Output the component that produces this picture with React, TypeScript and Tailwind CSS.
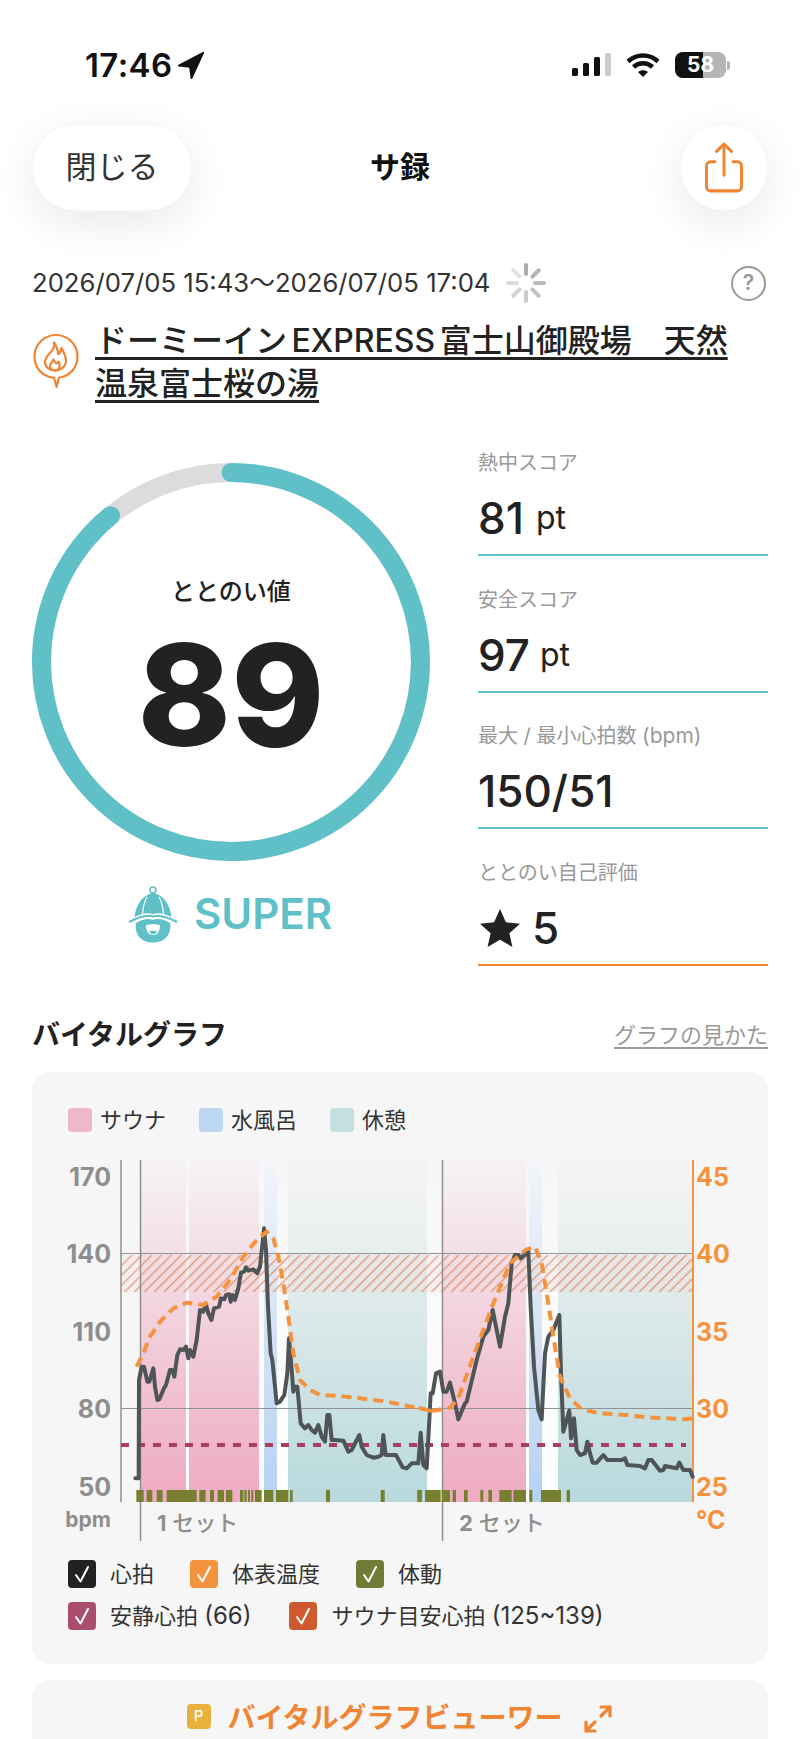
import React from "react";

const FONT = "font-['Inter','Noto_Sans_CJK_JP',sans-serif]";

// points are read off the chart at 3x, first list offset 40px, second 400px
const hrA: [number, number][] = [[286,1015],[296,1015],[297,720],[305,680],[312,680],[322,725],[328,725],[340,685],[345,740],[352,780],[358,778],[372,745],[378,735],[390,690],[398,690],[403,710],[412,645],[420,628],[430,630],[438,620],[445,655],[450,630],[460,650],[470,600],[480,510],[490,515],[497,490],[505,520],[514,540],[522,505],[537,500],[543,475],[553,478],[558,465],[568,463],[572,485],[577,465],[585,480],[595,445],[603,397],[612,395],[618,382],[625,392],[640,388],[652,400],[660,380],[672,265],[678,330],[684,500],[692,640],[697,660],[710,790],[720,785],[733,765],[742,700],[747,595],[752,650],[760,755],[765,740],[772,740],[782,850],[795,865],[805,855],[815,870],[825,878],[835,855],[845,890],[855,905],[862,825],[868,825],[875,900],[885,900],[910,902],[925,935],[935,930],[958,885],[965,920],[980,945],[1000,953],[1015,950],[1025,945],[1030,885],[1037,945],[1048,945],[1068,945],[1088,982],[1100,985],[1115,970],[1135,970],[1142,878],[1150,975],[1160,985],[1168,840],[1172,760],[1178,760],[1188,700]];
const hrB: [number, number][] = [[120,695],[130,755],[140,755],[150,728],[165,790],[175,838],[195,790],[200,785],[230,660],[250,590],[265,570],[278,510],[300,620],[315,530],[325,490],[335,370],[345,345],[355,345],[362,355],[385,335],[392,500],[402,680],[415,810],[425,838],[435,640],[445,590],[460,570],[478,525],[483,700],[490,875],[500,840],[508,812],[513,895],[522,835],[530,930],[540,945],[555,940],[562,905],[570,940],[578,968],[590,968],[610,945],[622,960],[665,960],[675,955],[682,975],[720,978],[735,985],[745,960],[755,960],[780,992],[790,990],[795,978],[830,985],[838,968],[850,990],[870,990],[878,1010]];
const tempA: [number, number][] = [[290,680],[310,640],[330,590],[360,545],[400,505],[440,488],[490,495],[530,470],[570,420],[610,350],[650,300],[680,275],[700,295],[715,350],[730,430],[745,530],[760,640],[780,720],[810,750],[840,765],[900,768],[960,775],[1040,785],[1100,797],[1170,812]];
const tempB: [number, number][] = [[60,805],[100,812],[150,803],[175,775],[220,650],[280,490],[330,370],[380,328],[405,320],[425,370],[445,490],[460,590],[480,710],[510,775],[545,808],[600,820],[680,825],[740,832],[800,835],[850,838],[880,835]];

const toPoints = (a: [number, number][], b: [number, number][]) =>
    [
        ...a.map(([x, y]) => `${x / 3 + 40},${y / 3 + 1140}`),
        ...b.map(([x, y]) => `${x / 3 + 400},${y / 3 + 1140}`),
    ].join(" ");

const moveA: [number, number][] = [[289,311],[320,337],[350,368],[380,470],[478,497],[510,522],[533,552],[558,577],[600,610],[613,620],[624,630],[634,640],[645,665],[672,700],[708,745],[750,758],[858,870],[1022,1034],[1133,1145],[1155,1200]];
const moveB: [number, number][] = [[52,65],[75,122],[125,150],[158,168],[192,203],[241,250],[265,276],[298,335],[340,378],[388,397],[423,483],[500,510]];

const leftTicks = [["170", 1177], ["140", 1254], ["110", 1332], ["80", 1409], ["50", 1487]] as const;
const rightTicks = [["45", 1177], ["40", 1254], ["35", 1332], ["30", 1409], ["25", 1487]] as const;

const Spinner = () => (
    <svg width="40" height="40" viewBox="-20 -20 40 40">
        {[0, 45, 90, 135, 180, 225, 270, 315].map((deg, i) => (
            <line
                key={deg}
                x1="0"
                y1="-9"
                x2="0"
                y2="-18"
                stroke="#a8a8a8"
                strokeWidth="4"
                strokeLinecap="round"
                opacity={0.95 - i * 0.09}
                transform={`rotate(${deg})`}
            />
        ))}
    </svg>
);

const PinFlame = () => (
    <svg width="48" height="58" viewBox="0 0 48 58" fill="none" stroke="#ef8432" strokeWidth="2.2" strokeLinejoin="round" strokeLinecap="round">
        <path d="M20 44.5C9.5 42.8 2.5 34 2.5 23.5 2.5 11.6 12.1 2 24 2s21.5 9.6 21.5 21.5c0 10.5-7 19.300-17.500 21l-1 0-2.500 9.500-2.500-9.500z" />
        <path d="M22 10c1 4-1 7-4 10-3 3-5 6-5 9 0 5 4.500 8.500 10 8.500s11-3.500 11-10c0-4-2-8-4.500-12.500-.5 3-1.500 5-3 6-.5-4-2-8-4.500-11.500z" />
        <path d="M23 37.500c-3 0-5-2-5-4.500 0-2 2-4 3.500-6.500 1 2 1.500 3 3 4 1-.5 2-1.500 2-2 .8 1.500 1.500 3 1 5-.5 2.500-2 4-4.500 4z" />
    </svg>
);

const Mascot = () => (
    <svg width="50" height="58" viewBox="0 0 50 58">
        <circle cx="25" cy="5" r="3" fill="none" stroke="#5fc0c8" strokeWidth="1.600" />
        <path d="M25 8C14 10 8 20 6.500 32 13 29 19 27 25 29 31 27 37 29 43.500 32 42 20 36 10 25 8z" fill="#5fc0c8" />
        <path d="M19 12C16 17 15 23 14.500 29M31 12C34 17 35 23 35.500 29" fill="none" stroke="#fff" strokeWidth="1.200" />
        <path d="M1 37C9 33 18 29 25 31.500 32 29 41 33 49 37" fill="none" stroke="#5fc0c8" strokeWidth="2" />
        <path d="M8 38C14 34.500 20 33 25 35 30 33 36 34.500 42 38 44 50 36 57.500 25 57.500 14 57.500 6 50 8 38z" fill="#5fc0c8" />
        <path d="M18 40C22 39 28 39 32 40 32 47 29 50 25 50 21 50 18 47 18 40z" fill="#fff" />
        <path d="M21 46.500C23 45.500 27 45.500 29 46.500 28 48.500 26.500 49 25 49 23.500 49 22 48.500 21 46.500z" fill="#5fc0c8" />
    </svg>
);

const Stat: React.FC<{ label: React.ReactNode; line: string; children: React.ReactNode }> = ({ label, line, children }) => (
    <div className={`h-[111px] border-b-[2.5px] ${line}`}>
        <p className="h-[36px] text-[20px] leading-[36px] text-[#999999]">{label}</p>
        <div className="mt-[13px] flex h-[48px] items-center text-[#222222]">{children}</div>
    </div>
);

const LegendSwatch: React.FC<{ color: string; label: string }> = ({ color, label }) => (
    <div className="flex items-center gap-[8px]">
        <span className={`h-[24px] w-[24px] rounded-[4px] ${color}`} />
        <span className="text-[22px] leading-[24px] text-[#333333]">{label}</span>
    </div>
);

const CheckItem: React.FC<{ color: string; label: React.ReactNode }> = ({ color, label }) => (
    <div className="flex items-center gap-[14px]">
        <span className={`flex h-[28px] w-[28px] items-center justify-center rounded-[4px] ${color}`}>
            <svg width="16" height="18" viewBox="0 0 16 18" fill="none" stroke="#fff" strokeWidth="2" strokeLinecap="round" strokeLinejoin="round">
                <path d="M2 10l4.500 6.500L14 2" />
            </svg>
        </span>
        <span className="text-[22px] leading-[28px] text-[#333333]">{label}</span>
    </div>
);

const VitalChart = () => (
    <svg width="736" height="410" viewBox="32 1140 736 410" className="mt-[8px] block">
        <defs>
            <linearGradient id="plot" x1="0" y1="0" x2="0" y2="1">
                <stop offset="0" stopColor="#f6f6f6" />
                <stop offset="1" stopColor="#ffffff" />
            </linearGradient>
            <linearGradient id="sauna" x1="0" y1="0" x2="0" y2="1">
                <stop offset="0" stopColor="#f6f3f5" />
                <stop offset="1" stopColor="#eeaac2" />
            </linearGradient>
            <linearGradient id="water" x1="0" y1="0" x2="0" y2="1">
                <stop offset="0" stopColor="#f3f5f9" />
                <stop offset="1" stopColor="#b5d2f2" />
            </linearGradient>
            <linearGradient id="rest" x1="0" y1="0" x2="0" y2="1">
                <stop offset="0" stopColor="#f4f4f4" />
                <stop offset="0.2" stopColor="#ecf0f0" />
                <stop offset="1" stopColor="#b8d9dc" />
            </linearGradient>
            <pattern id="hatch" width="7" height="7" patternUnits="userSpaceOnUse" patternTransform="rotate(45)">
                <rect x="0" y="0" width="1.300" height="7" fill="#d4643c" opacity="0.6" />
            </pattern>
        </defs>

        <rect x="140" y="1160" width="553" height="342" fill="url(#plot)" />
        <rect x="140" y="1160" width="46" height="342" fill="url(#sauna)" />
        <rect x="189" y="1160" width="70" height="342" fill="url(#sauna)" />
        <rect x="264" y="1160" width="13" height="342" fill="url(#water)" />
        <rect x="288" y="1160" width="139" height="342" fill="url(#rest)" />
        <rect x="443" y="1160" width="83" height="342" fill="url(#sauna)" />
        <rect x="529" y="1160" width="13" height="342" fill="url(#water)" />
        <rect x="558" y="1160" width="135" height="342" fill="url(#rest)" />

        <rect x="121" y="1255" width="572" height="37" fill="#f3d9cf" opacity="0.3" />
        <rect x="121" y="1255" width="572" height="37" fill="url(#hatch)" />

        <line x1="121" y1="1253.500" x2="693" y2="1253.500" stroke="#8f9296" strokeWidth="1.200" />
        <line x1="121" y1="1408.500" x2="693" y2="1408.500" stroke="#8f9296" strokeWidth="1.200" />
        <line x1="121" y1="1160" x2="121" y2="1502" stroke="#8f8f8f" strokeWidth="1.500" />
        <line x1="140.500" y1="1160" x2="140.500" y2="1541" stroke="#8f8f8f" strokeWidth="1.500" />
        <line x1="442.500" y1="1160" x2="442.500" y2="1541" stroke="#8f8f8f" strokeWidth="1.500" />
        <line x1="693" y1="1160" x2="693" y2="1502" stroke="#f5923e" strokeWidth="2" />

        {moveA.map(([a, b]) => (
            <rect key={`a${a}`} x={a / 3 + 40} y="1490" width={(b - a) / 3} height="12" fill="#76802f" />
        ))}
        {moveB.map(([a, b]) => (
            <rect key={`b${a}`} x={a / 3 + 400} y="1490" width={(b - a) / 3} height="12" fill="#76802f" />
        ))}

        <line x1="121" y1="1445" x2="686" y2="1445" stroke="#a93d62" strokeWidth="4" strokeDasharray="8 8" />
        <polyline points={toPoints(hrA, hrB)} fill="none" stroke="#4f5456" strokeWidth="4" strokeLinejoin="round" strokeLinecap="round" />
        <polyline points={toPoints(tempA, tempB)} fill="none" stroke="#f5923e" strokeWidth="4" strokeDasharray="10 6" strokeLinejoin="round" />

        <g fontSize="25" fontWeight="700">
            {leftTicks.map(([t, y]) => (
                <text key={t} x="111" y={y} textAnchor="end" dominantBaseline="central" fill="#8e8e8e">{t}</text>
            ))}
            {rightTicks.map(([t, y]) => (
                <text key={t} x="696" y={y} dominantBaseline="central" fill="#f5923e">{t}</text>
            ))}
            <text x="696" y="1520" dominantBaseline="central" fill="#f5923e">°C</text>
        </g>
        <text x="111" y="1519" textAnchor="end" dominantBaseline="central" fontSize="21" fontWeight="700" fill="#8e8e8e">bpm</text>
        <text x="157" y="1523" dominantBaseline="central" fontSize="22" fontWeight="500" fill="#8e8e8e"><tspan fontWeight="700">1</tspan> セット</text>
        <text x="459" y="1523" dominantBaseline="central" fontSize="22" fontWeight="500" fill="#8e8e8e"><tspan fontWeight="700">2</tspan> セット</text>
    </svg>
);

export default function App() {
    return (
        <div className={`h-[1739px] overflow-hidden bg-white px-[32px] ${FONT}`}>
            {/* Status bar */}
            <div className="-mx-[32px] flex h-[100px] items-center justify-between pl-[85px] pr-[70px] pt-[30px]">
                <div className="flex items-center gap-[5px]">
                    <span className="text-[33px] font-semibold leading-none tracking-[0.4px] text-[#111111]">17:46</span>
                    <svg width="28" height="28" viewBox="0 0 30 30" fill="#111111">
                        <path d="M28 2 2 15.500l12 1.500 1.500 12z" stroke="#111111" strokeWidth="2" strokeLinejoin="round" />
                    </svg>
                </div>
                <div className="flex items-center">
                    <svg width="39" height="26" viewBox="0 0 39 26">
                        <rect x="0" y="16" width="6" height="8" rx="1.500" fill="#111111" />
                        <rect x="11" y="11" width="6" height="13" rx="1.500" fill="#111111" />
                        <rect x="22" y="5" width="6" height="19" rx="1.500" fill="#111111" />
                        <rect x="33" y="1" width="6" height="23" rx="1.500" fill="#cccccc" />
                    </svg>
                    <svg className="ml-[15px]" width="34" height="26" viewBox="0 0 34 26" fill="none" stroke="#111111" strokeWidth="4.500">
                        <path d="M2 9.500C10.500 1.500 23.500 1.500 32 9.500" />
                        <path d="M7.500 15C13 10 21 10 26.500 15" />
                        <path d="M17 25l-5-5c3-2.500 7-2.500 10 0z" fill="#111111" stroke="none" />
                    </svg>
                    <div className="relative ml-[15px] h-[26px] w-[51px] overflow-hidden rounded-[8px] bg-[#b5b5b5]">
                        <div className="h-full w-[28px] bg-[#111111]" />
                        <span className="absolute inset-0 flex items-center justify-center text-[21px] font-bold text-white">58</span>
                    </div>
                    <span className="ml-[1px] h-[9px] w-[3px] rounded-r-[2px] bg-[#b5b5b5]" />
                </div>
            </div>

            {/* Nav */}
            <div className="mt-[24px] grid h-[87px] grid-cols-[1fr_auto_1fr] items-center">
                <button className="h-[87px] w-[160px] rounded-full border border-[#f6f6f6] bg-white text-[31px] text-[#333333] shadow-[0_12px_44px_rgba(0,0,0,0.09)]">
                    閉じる
                </button>
                <h1 className="text-[30px] font-bold text-[#111111]">サ録</h1>
                <button className="flex h-[87px] w-[88px] items-center justify-center justify-self-end rounded-full border border-[#f6f6f6] bg-white shadow-[0_12px_44px_rgba(0,0,0,0.09)]">
                    <svg width="40" height="54" viewBox="0 0 40 52" preserveAspectRatio="none" fill="none" stroke="#ef8432" strokeWidth="3" strokeLinecap="round" strokeLinejoin="round">
                        <path d="M11 20H6.500a4 4 0 0 0-4 4v20a4 4 0 0 0 4 4h27a4 4 0 0 0 4-4V24a4 4 0 0 0-4-4H29" />
                        <path d="M20 33V3M12.500 10 20 3l7.500 7" />
                    </svg>
                </button>
            </div>

            {/* Date row */}
            <div className="mt-[56px] flex h-[32px] items-center">
                <span className="text-[25.7px] leading-[32px] text-[#333333]">2026/07/05 15:43〜2026/07/05 17:04</span>
                <span className="ml-[16px]"><Spinner /></span>
                <span className="ml-auto mr-[2px] flex h-[35px] w-[35px] items-center justify-center rounded-full border-[2.5px] border-[#999999] text-[21px] font-semibold text-[#999999]">?</span>
            </div>

            {/* Facility name */}
            <div className="mt-[20px] flex items-center gap-[15px] pr-[36px]">
                <span className="shrink-0"><PinFlame /></span>
                <a className="text-[32px] font-medium leading-[43px] text-[#222222] underline decoration-[3px] underline-offset-[5px] [word-spacing:-4px]">
                    ドーミーイン EXPRESS 富士山御殿場　天然温泉富士桜の湯
                </a>
            </div>

            {/* Scores */}
            <div className="mt-[40px] flex gap-[48px]">
                <div className="w-[398px] pt-[18px]">
                    <div className="relative h-[398px] w-[398px]">
                        <svg width="398" height="398" viewBox="0 0 398 398" className="absolute inset-0" fill="none" strokeWidth="19">
                            <circle cx="199" cy="199" r="189.500" stroke="#dcdcdc" />
                            <circle
                                cx="199"
                                cy="199"
                                r="189.500"
                                stroke="#5fc0c8"
                                strokeLinecap="round"
                                strokeDasharray="1059.700 1190.700"
                                transform="rotate(-90 199 199)"
                            />
                        </svg>
                        <div className="absolute inset-0 flex flex-col items-center pt-[111px]">
                            <p className="text-[24px] font-medium leading-[36px] text-[#222222]">ととのい値</p>
                            <p className="mt-[15px] text-[141px] font-extrabold leading-[140px] text-[#222222]">89</p>
                        </div>
                    </div>
                    <div className="mt-[24px] flex items-center justify-center gap-[16px] pr-[2px]">
                        <Mascot />
                        <span className="text-[42px] font-semibold leading-none text-[#5fc0c8]">SUPER</span>
                    </div>
                </div>

                <div className="flex flex-1 flex-col gap-[25.7px]">
                    <Stat label="熱中スコア" line="border-[#5fc0c8]">
                        <span className="text-[44px] font-medium leading-none">81</span>
                        <span className="ml-[12px] text-[32px] leading-none">pt</span>
                    </Stat>
                    <Stat label="安全スコア" line="border-[#5fc0c8]">
                        <span className="text-[44px] font-medium leading-none">97</span>
                        <span className="ml-[10px] text-[32px] leading-none">pt</span>
                    </Stat>
                    <Stat label={<>最大 / 最小心拍数 <span className="text-[21px]">(bpm)</span></>} line="border-[#5fc0c8]">
                        <span className="text-[44px] font-medium leading-none">150/51</span>
                    </Stat>
                    <Stat label="ととのい自己評価" line="border-[#ef8432]">
                        <svg className="ml-[2px]" width="40" height="38" viewBox="0 0 40 38" fill="#222222">
                            <path d="M20 0l5.900 13.300 14.100 1.400-10.600 9.500L32.400 38 20 30.700 7.600 38l3-13.800L0 14.700l14.100-1.400z" />
                        </svg>
                        <span className="ml-[12px] text-[44px] font-medium leading-none">5</span>
                    </Stat>
                </div>
            </div>

            {/* Vital graph */}
            <div className="mt-[49px] flex h-[40px] items-center justify-between">
                <h2 className="text-[28px] font-semibold text-[#222222]">バイタルグラフ</h2>
                <a className="text-[22px] text-[#999999] underline underline-offset-[4px]">グラフの見かた</a>
            </div>

            <div className="mt-[17px] h-[592px] rounded-[20px] bg-[#f6f6f6] pt-[36px]">
                <div className="flex gap-[33px] px-[36px]">
                    <LegendSwatch color="bg-[#eeb7cb]" label="サウナ" />
                    <LegendSwatch color="bg-[#bcd6f3]" label="水風呂" />
                    <LegendSwatch color="bg-[#c3dfdf]" label="休憩" />
                </div>
                <VitalChart />
                <div className="mt-[10px] flex flex-col gap-[14px] px-[36px]">
                    <div className="flex gap-[36px]">
                        <CheckItem color="bg-[#222222]" label="心拍" />
                        <CheckItem color="bg-[#f5923e]" label="体表温度" />
                        <CheckItem color="bg-[#6f7c35]" label="体動" />
                    </div>
                    <div className="flex gap-[38px]">
                        <CheckItem color="bg-[#ab4d6e]" label={<>安静心拍 <span className="text-[24px]">(66)</span></>} />
                        <CheckItem color="bg-[#cf5a2f]" label={<>サウナ目安心拍 <span className="text-[24px]">(125~139)</span></>} />
                    </div>
                </div>
            </div>

            <div className="mt-[16px] flex h-[90px] items-start justify-center rounded-t-[20px] bg-[#f6f6f6] pt-[24px]">
                <span className="flex h-[25px] w-[24px] items-center justify-center rounded-[4px] bg-[#e8b23c] text-[15px] font-medium text-white">P</span>
                <span className="ml-[17px] text-[28px] font-semibold leading-[28px] text-[#ef8432]">バイタルグラフビューワー</span>
                <svg className="ml-[21px]" width="30" height="30" viewBox="0 0 30 30" fill="none" stroke="#ef8432" strokeWidth="3.200" strokeLinecap="round" strokeLinejoin="round">
                    <path d="M18 12 27 3M18 3h9v9M3 27l9-9M3 18v9h9" />
                </svg>
            </div>
        </div>
    );
}
